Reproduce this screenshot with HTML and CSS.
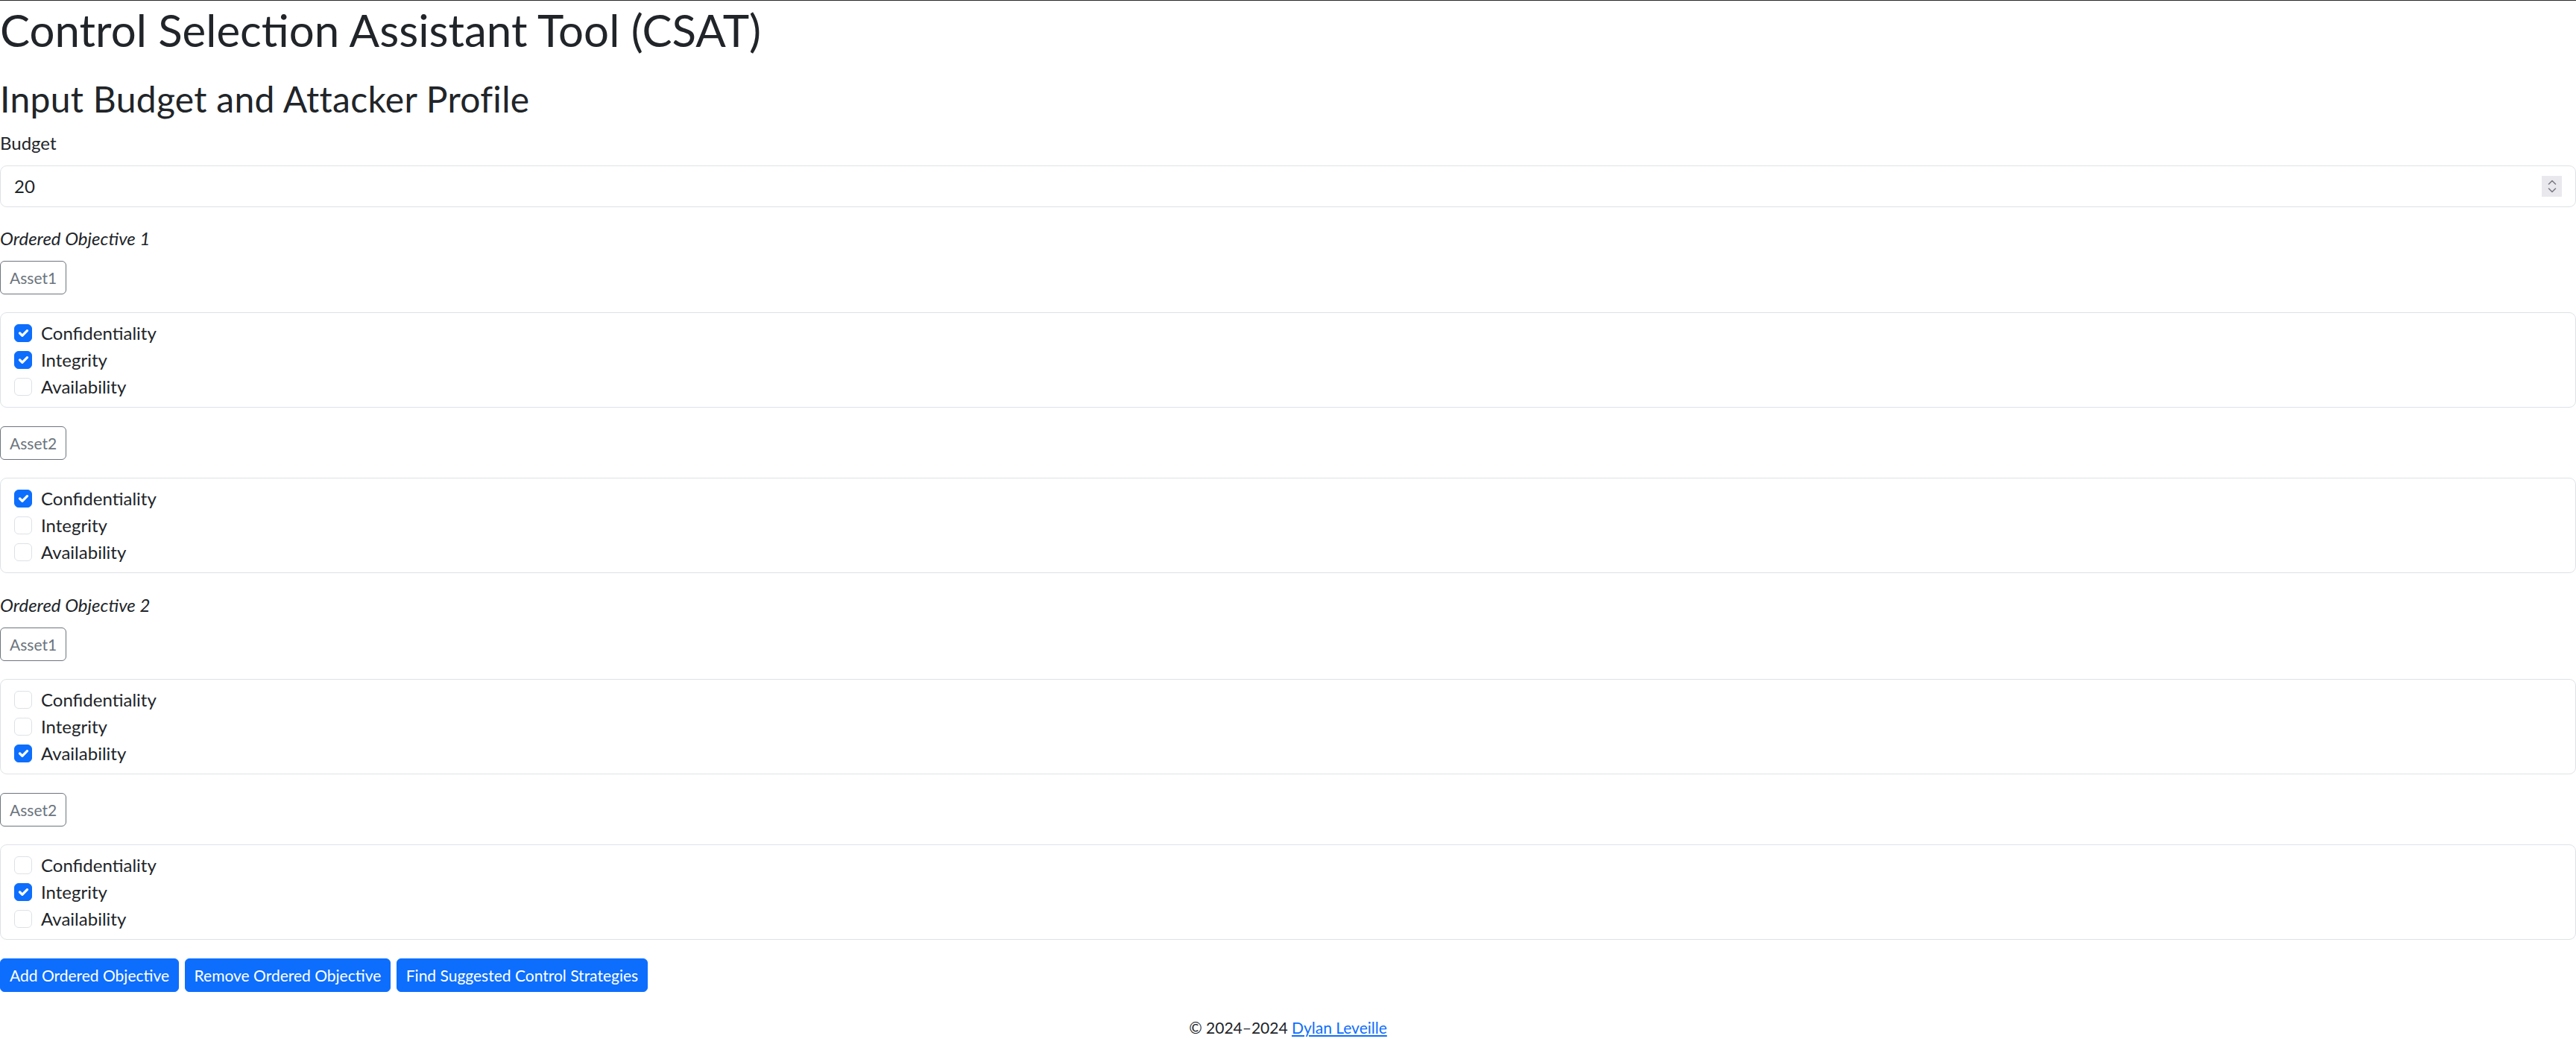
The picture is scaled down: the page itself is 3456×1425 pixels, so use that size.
FILE: index.html
```html
<!DOCTYPE html>
<html lang="en">
<head>
<meta charset="utf-8">
<title>Control Selection Assistant Tool (CSAT)</title>
<link rel="stylesheet" href="styles.css">
</head>
<body>
<main class="page">
  <h1 class="title">Control Selection Assistant Tool (CSAT)</h1>
  <h2 class="subtitle">Input Budget and Attacker Profile</h2>

  <form class="profile-form">
    <label class="field-label">Budget</label>
    <div class="number-input">
      <span class="number-value">20</span>
      <span class="spinner">
        <svg width="14" height="22" viewBox="0 0 14 22" aria-hidden="true">
          <path d="M2.5 8 L7 3.5 L11.5 8" fill="none" stroke="#7b7b85" stroke-width="1.6" stroke-linecap="round" stroke-linejoin="round"/>
          <path d="M2.5 14 L7 18.5 L11.5 14" fill="none" stroke="#7b7b85" stroke-width="1.6" stroke-linecap="round" stroke-linejoin="round"/>
        </svg>
      </span>
    </div>

    <section class="objective">
      <p class="objective-title">Ordered Objective 1</p>

      <div class="asset-name">Asset1</div>
      <div class="cia-box">
        <div class="check"><span class="checkbox is-checked"><svg viewBox="0 0 20 20"><path d="m6 10 3 3 6-6"/></svg></span><span class="check-label">Confidentiality</span></div>
        <div class="check"><span class="checkbox is-checked"><svg viewBox="0 0 20 20"><path d="m6 10 3 3 6-6"/></svg></span><span class="check-label">Integrity</span></div>
        <div class="check"><span class="checkbox"></span><span class="check-label">Availability</span></div>
      </div>

      <div class="asset-name">Asset2</div>
      <div class="cia-box">
        <div class="check"><span class="checkbox is-checked"><svg viewBox="0 0 20 20"><path d="m6 10 3 3 6-6"/></svg></span><span class="check-label">Confidentiality</span></div>
        <div class="check"><span class="checkbox"></span><span class="check-label">Integrity</span></div>
        <div class="check"><span class="checkbox"></span><span class="check-label">Availability</span></div>
      </div>
    </section>

    <section class="objective">
      <p class="objective-title">Ordered Objective 2</p>

      <div class="asset-name">Asset1</div>
      <div class="cia-box">
        <div class="check"><span class="checkbox"></span><span class="check-label">Confidentiality</span></div>
        <div class="check"><span class="checkbox"></span><span class="check-label">Integrity</span></div>
        <div class="check"><span class="checkbox is-checked"><svg viewBox="0 0 20 20"><path d="m6 10 3 3 6-6"/></svg></span><span class="check-label">Availability</span></div>
      </div>

      <div class="asset-name">Asset2</div>
      <div class="cia-box">
        <div class="check"><span class="checkbox"></span><span class="check-label">Confidentiality</span></div>
        <div class="check"><span class="checkbox is-checked"><svg viewBox="0 0 20 20"><path d="m6 10 3 3 6-6"/></svg></span><span class="check-label">Integrity</span></div>
        <div class="check"><span class="checkbox"></span><span class="check-label">Availability</span></div>
      </div>
    </section>

    <div class="actions">
      <button type="button" class="btn">Add Ordered Objective</button>
      <button type="button" class="btn">Remove Ordered Objective</button>
      <button type="button" class="btn">Find Suggested Control Strategies</button>
    </div>
  </form>

  <footer class="footer">© 2024–2024 <a href="#" class="footer-link">Dylan Leveille</a></footer>
</main>
</body>
</html>
```

FILE: styles.css
```css
* {
  box-sizing: border-box;
}

html, body {
  background: #ffffff;
}

body {
  margin: 0;
  border-top: 1px solid #2a2a2a;
  font-family: Lato, "Open Sans", sans-serif;
  font-size: 24px;
  line-height: 36px;
  color: #212529;
}

.page {
  display: block;
}

.title {
  margin: 3px 0 28px;
  font-size: 60px;
  line-height: 72px;
  font-weight: 400;
}

.subtitle {
  margin: 0 0 12px;
  font-size: 48px;
  line-height: 57.6px;
  font-weight: 400;
  letter-spacing: 0.3px;
}

.profile-form {
  display: block;
  margin: 0;
}

.field-label {
  display: block;
  margin-bottom: 12px;
}

.number-input {
  display: flex;
  align-items: center;
  justify-content: space-between;
  height: 56px;
  padding: 9px 18px;
  border: 1px solid #dee2e6;
  border-radius: 9px;
  margin-bottom: 24px;
}

.spinner {
  display: flex;
  align-items: center;
  justify-content: center;
  width: 27px;
  height: 28px;
  background: #e9e9ed;
}

.objective-title {
  margin: 0 0 12px;
  font-style: italic;
}

.asset-name {
  display: inline-block;
  font-size: 21px;
  line-height: 33px;
  padding: 5px 12px;
  border: 1px solid #6c757d;
  border-radius: 6px;
  color: #6c757d;
  margin-bottom: 24px;
  vertical-align: top;
}

.cia-box {
  border: 1px solid #dee2e6;
  border-radius: 9px;
  padding: 9px 18px;
  margin-bottom: 25px;
}

.check {
  display: flex;
  align-items: flex-start;
  height: 36px;
}

.checkbox {
  flex: none;
  width: 24px;
  height: 24px;
  margin-top: 6px;
  margin-right: 12px;
  border: 1px solid #dee2e6;
  border-radius: 6px;
  background: #ffffff;
  display: flex;
}

.checkbox svg {
  width: 100%;
  height: 100%;
}

.checkbox path {
  fill: none;
  stroke: #ffffff;
  stroke-width: 3;
  stroke-linecap: round;
  stroke-linejoin: round;
}

.checkbox.is-checked {
  background: #0d6efd;
  border-color: #0d6efd;
}

.actions {
  display: flex;
  gap: 7.5px;
}

.btn {
  font-family: inherit;
  font-size: 21px;
  line-height: 31px;
  padding: 6px 12px;
  border: 1px solid #0d6efd;
  border-radius: 6px;
  background: #0d6efd;
  color: #ffffff;
  cursor: pointer;
}

.footer {
  margin-top: 32px;
  text-align: center;
  font-size: 21px;
  line-height: 31.5px;
}

.footer-link {
  color: #0d6efd;
  text-decoration: underline;
}
```
